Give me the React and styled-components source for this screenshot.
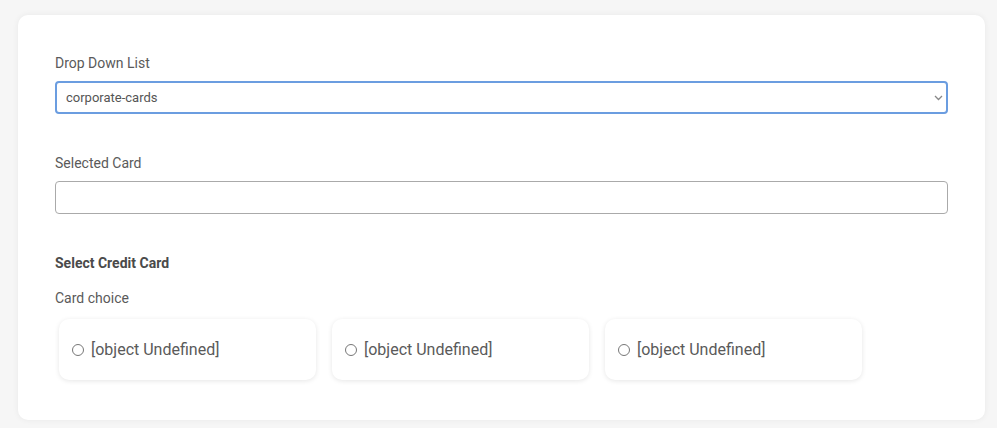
import React, { useState } from 'react';
import styled, { createGlobalStyle } from 'styled-components';

const GlobalStyle = createGlobalStyle`
  html, body {
    margin: 0;
    background: #f6f6f6;
    font-family: Roboto, "Liberation Sans", sans-serif;
  }
  body {
    padding: 15px 12px 8px 18px;
  }
`;

const Panel = styled.div`
  background: #fff;
  border-radius: 10px;
  box-shadow: 0 0 6px rgba(0, 0, 0, 0.06);
  padding: 40px 37px 40px;
  height: 405px;
  box-sizing: border-box;
`;

const Field = styled.div`
  display: flex;
  flex-direction: column;
  gap: 10px;
  margin-bottom: 41px;
`;

const Label = styled.label`
  font-size: 14px;
  line-height: 16px;
  color: #5a5a5a;
`;

const SelectWrap = styled.div`
  position: relative;
`;

const Select = styled.select`
  appearance: none;
  width: 100%;
  height: 33px;
  box-sizing: border-box;
  border: 2px solid #6b9de0;
  border-radius: 4px;
  padding: 0 9px;
  font-family: inherit;
  font-size: 13px;
  color: #555;
  background: #fff;
  outline: none;
`;

const Chevron = styled.svg`
  position: absolute;
  right: 5px;
  top: 14px;
  pointer-events: none;
`;

const Input = styled.input`
  width: 100%;
  height: 33px;
  box-sizing: border-box;
  border: 1px solid #aaa;
  border-radius: 4px;
  padding: 0 10px;
  font-family: inherit;
  font-size: 13px;
  outline: none;
`;

const Heading = styled.div`
  font-size: 14px;
  font-weight: 700;
  line-height: 16px;
  color: #4a4a4a;
  margin-bottom: 19px;
`;

const ChoiceLabel = styled.div`
  font-size: 14px;
  line-height: 16px;
  color: #5a5a5a;
  margin-bottom: 13px;
`;

const Choices = styled.div`
  display: flex;
  gap: 16px;
  padding-left: 4px;
`;

const Choice = styled.label`
  width: 257px;
  height: 61px;
  box-sizing: border-box;
  border-radius: 10px;
  background: #fff;
  box-shadow: 0 1px 5px rgba(0, 0, 0, 0.1);
  display: flex;
  align-items: center;
  gap: 7px;
  padding-left: 13px;
  font-size: 16px;
  color: #5a5a5a;
  cursor: pointer;
`;

const Radio = styled.span`
  width: 10px;
  height: 10px;
  border: 1px solid #777;
  border-radius: 50%;
  flex-shrink: 0;
  background: ${(p) => (p.checked ? '#6b9de0' : '#fff')};
`;

const App = () => {
  const [picked, setPicked] = useState(null);
  const cards = ['[object Undefined]', '[object Undefined]', '[object Undefined]'];

  return (
    <>
      <GlobalStyle />
      <Panel>
        <Field>
          <Label>Drop Down List</Label>
          <SelectWrap>
            <Select defaultValue="corporate-cards">
              <option value="corporate-cards">corporate-cards</option>
            </Select>
            <Chevron width="9" height="6" viewBox="0 0 9 6">
              <path d="M1 1l3.5 3.5L8 1" fill="none" stroke="#888" strokeWidth="1.3" />
            </Chevron>
          </SelectWrap>
        </Field>
        <Field>
          <Label>Selected Card</Label>
          <Input type="text" />
        </Field>
        <Heading>Select Credit Card</Heading>
        <ChoiceLabel>Card choice</ChoiceLabel>
        <Choices>
          {cards.map((c, i) => (
            <Choice key={i} onClick={() => setPicked(i)}>
              <Radio checked={picked === i} />
              {c}
            </Choice>
          ))}
        </Choices>
      </Panel>
    </>
  );
};

export default App;
